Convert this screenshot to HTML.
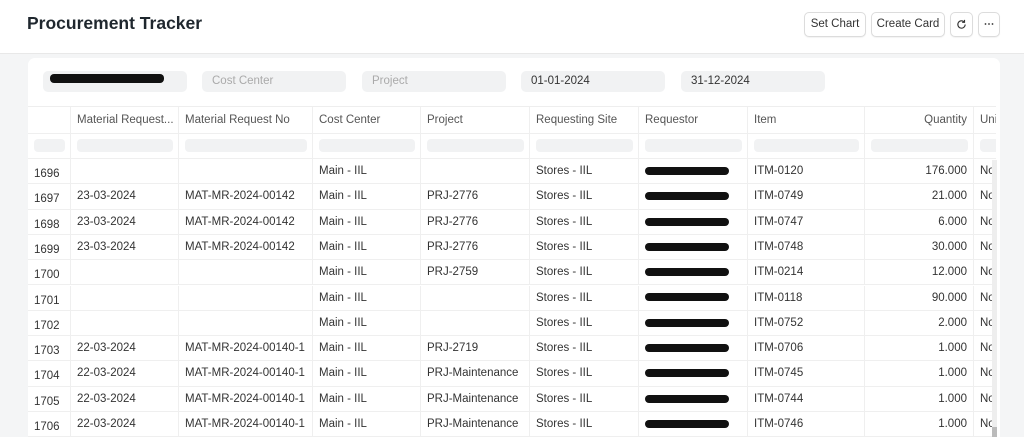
<!DOCTYPE html>
<html><head><meta charset="utf-8"><style>
*{box-sizing:border-box;margin:0;padding:0}
html,body{width:1024px;height:437px;overflow:hidden}
body{background:#f4f5f6;font-family:"Liberation Sans",sans-serif;color:#333;font-size:11.5px;position:relative}
.hdr{position:absolute;left:0;top:0;width:1024px;height:54px;background:#fff;border-bottom:1px solid #e8e8e8}
.title{position:absolute;left:27px;top:13px;font-size:17.5px;font-weight:bold;color:#1f272e}
.btn{position:absolute;top:12px;height:25px;border:1px solid #dcdcdc;border-radius:5px;background:#fff;font-size:11.5px;line-height:23px;text-align:center;color:#333;box-shadow:0 1px 1px rgba(0,0,0,.05)}
.card{position:absolute;left:28px;top:58px;width:972px;height:379px;background:#fff;border-radius:7px 7px 0 0;overflow:hidden}
.f{position:absolute;top:13px;height:21px;width:144px;background:#f1f2f3;border-radius:5px;color:#aaa;line-height:21px;padding-left:10px;font-size:11.5px}
.grid{position:absolute;left:0;top:48px;width:968px;height:340px;overflow:hidden;border-top:1px solid #eee}
.row{position:absolute;left:0;height:25.3px;width:980px;border-bottom:1px solid #efefef}
.c{position:absolute;top:0;height:100%;border-right:1px solid #efefef;padding-left:6px;line-height:25px;white-space:nowrap;overflow:hidden}
.h .c{color:#555;line-height:26px}
.fl{position:absolute;top:5px;height:13px;background:#f1f2f3;border-radius:4px}
.blk{display:inline-block;width:84px;height:8px;background:#111;border-radius:4px;vertical-align:middle}
.sb{position:absolute;left:992px;top:160px;width:5px;height:277px;background:#eee}
.th{position:absolute;left:992px;top:427px;width:5px;height:10px;background:#bbb}
</style></head><body>
<div class="hdr"><div class="title">Procurement Tracker</div>
<div class="btn" style="left:804px;width:62px">Set Chart</div>
<div class="btn" style="left:871px;width:74px">Create Card</div>
<div class="btn" style="left:950px;width:23px"><svg width="11" height="11" viewBox="0 0 12 12" style="margin-top:6px"><path d="M10 6a4 4 0 1 1-1.2-2.9" fill="none" stroke="#333" stroke-width="1.2"/><path d="M9.3 1v2.6H6.7" fill="none" stroke="#333" stroke-width="1.2"/></svg></div>
<div class="btn" style="left:978px;width:22px"><svg width="10" height="4" viewBox="0 0 10 4" style="margin-top:9px;display:block;margin-left:5px"><circle cx="1.5" cy="2" r="0.9" fill="#333"/><circle cx="5" cy="2" r="0.9" fill="#333"/><circle cx="8.5" cy="2" r="0.9" fill="#333"/></svg></div>
</div>
<div class="card">
<div class="f" style="left:15px"><span class="blk" style="width:114px;height:9px;margin-left:-3px;margin-top:-4px"></span></div>
<div class="f" style="left:174px">Cost Center</div>
<div class="f" style="left:334px">Project</div>
<div class="f" style="left:493px;color:#333">01-01-2024</div>
<div class="f" style="left:653px;color:#333">31-12-2024</div>
<div class="grid" id="g"></div>
</div>
<div class="sb"></div><div class="th"></div>
<script>
var L=[0,43,151,285,393,502,611,720,837,946,990];
var H=["","Material Request...","Material Request No","Cost Center","Project","Requesting Site","Requestor","Item","Quantity","Uni"];
var D=[
["1696","","","Main - IIL","","Stores - IIL","x","ITM-0120","176.000"],
["1697","23-03-2024","MAT-MR-2024-00142","Main - IIL","PRJ-2776","Stores - IIL","x","ITM-0749","21.000"],
["1698","23-03-2024","MAT-MR-2024-00142","Main - IIL","PRJ-2776","Stores - IIL","x","ITM-0747","6.000"],
["1699","23-03-2024","MAT-MR-2024-00142","Main - IIL","PRJ-2776","Stores - IIL","x","ITM-0748","30.000"],
["1700","","","Main - IIL","PRJ-2759","Stores - IIL","x","ITM-0214","12.000"],
["1701","","","Main - IIL","","Stores - IIL","x","ITM-0118","90.000"],
["1702","","","Main - IIL","","Stores - IIL","x","ITM-0752","2.000"],
["1703","22-03-2024","MAT-MR-2024-00140-1","Main - IIL","PRJ-2719","Stores - IIL","x","ITM-0706","1.000"],
["1704","22-03-2024","MAT-MR-2024-00140-1","Main - IIL","PRJ-Maintenance","Stores - IIL","x","ITM-0745","1.000"],
["1705","22-03-2024","MAT-MR-2024-00140-1","Main - IIL","PRJ-Maintenance","Stores - IIL","x","ITM-0744","1.000"],
["1706","22-03-2024","MAT-MR-2024-00140-1","Main - IIL","PRJ-Maintenance","Stores - IIL","x","ITM-0746","1.000"]];
var g=document.getElementById('g'),s='';
function row(top,cells,cls,hgt){var r='<div class="row '+cls+'" style="top:'+top+'px;height:'+hgt+'px">';
for(var i=0;i<10;i++){var w=L[i+1]-L[i];var t=cells[i]||'';var st='left:'+L[i]+'px;width:'+w+'px;';
if(i==8)st+='text-align:right;padding-right:6px;';
if(i==0&&cls=='d')st+='padding-top:3px;';
if(t=='x')t='<span class="blk"></span>';
if(i==9&&cls=='d')t='No';
r+='<div class="c" style="'+st+'">'+t+'</div>';}
return r+'</div>';}
s+=row(0,H,'h',27);
var fr='<div class="row" style="top:27px;height:25px">';
for(var i=0;i<10;i++){fr+='<div class="c" style="left:'+L[i]+'px;width:'+(L[i+1]-L[i])+'px"></div><div class="fl" style="left:'+(L[i]+6)+'px;width:'+(L[i+1]-L[i]-12)+'px"></div>';}
s+=fr+'</div>';
for(var j=0;j<D.length;j++)s+=row(52+j*25.3,D[j],'d',25.3);
g.innerHTML=s;
</script>
</body></html>
